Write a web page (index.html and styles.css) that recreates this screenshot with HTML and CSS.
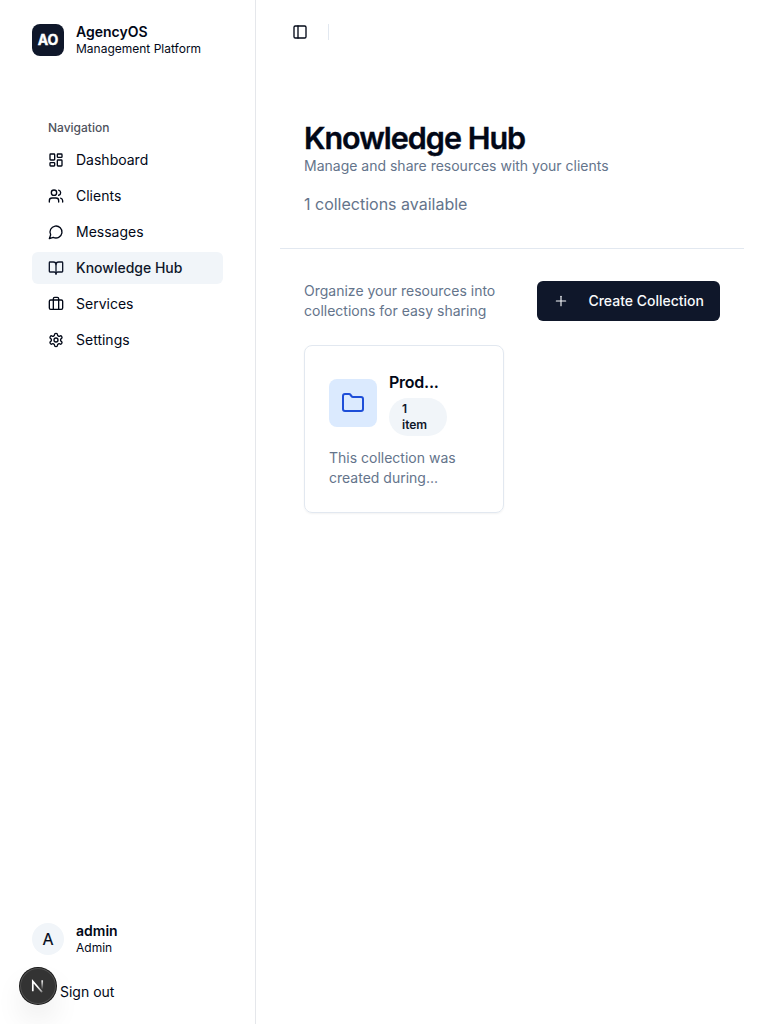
FILE: index.html
```html
<!DOCTYPE html>
<html lang="en">
<head>
<meta charset="utf-8">
<title>AgencyOS - Knowledge Hub</title>
<link rel="stylesheet" href="styles.css">
</head>
<body>
<div class="app">
  <aside class="sidebar">
    <div class="brand">
      <div class="logo">AO</div>
      <div class="stack"><span class="name">AgencyOS</span><span class="sub">Management Platform</span></div>
    </div>
    <nav class="nav">
      <div class="nav-label">Navigation</div>
      <a class="item"><svg class="icon" viewBox="0 0 24 24"><rect width="7" height="9" x="3" y="3" rx="1"/><rect width="7" height="5" x="14" y="3" rx="1"/><rect width="7" height="9" x="14" y="12" rx="1"/><rect width="7" height="5" x="3" y="16" rx="1"/></svg>Dashboard</a>
      <a class="item"><svg class="icon" viewBox="0 0 24 24"><path d="M16 21v-2a4 4 0 0 0-4-4H6a4 4 0 0 0-4 4v2"/><circle cx="9" cy="7" r="4"/><path d="M22 21v-2a4 4 0 0 0-3-3.87"/><path d="M16 3.13a4 4 0 0 1 0 7.75"/></svg>Clients</a>
      <a class="item"><svg class="icon" viewBox="0 0 24 24"><path d="M7.9 20A9 9 0 1 0 4 16.1L2 22Z"/></svg>Messages</a>
      <a class="item active"><svg class="icon" viewBox="0 0 24 24"><path d="M12 7v14"/><path d="M3 18a1 1 0 0 1-1-1V4a1 1 0 0 1 1-1h5a4 4 0 0 1 4 4 4 4 0 0 1 4-4h5a1 1 0 0 1 1 1v13a1 1 0 0 1-1 1h-6a3 3 0 0 0-3 3 3 3 0 0 0-3-3z"/></svg>Knowledge Hub</a>
      <a class="item"><svg class="icon" viewBox="0 0 24 24"><path d="M16 20V4a2 2 0 0 0-2-2h-4a2 2 0 0 0-2 2v16"/><rect width="20" height="14" x="2" y="6" rx="2"/></svg>Services</a>
      <a class="item"><svg class="icon" viewBox="0 0 24 24"><path d="M12.22 2h-.44a2 2 0 0 0-2 2v.18a2 2 0 0 1-1 1.73l-.43.25a2 2 0 0 1-2 0l-.15-.08a2 2 0 0 0-2.73.73l-.22.38a2 2 0 0 0 .73 2.73l.15.1a2 2 0 0 1 1 1.72v.51a2 2 0 0 1-1 1.74l-.15.09a2 2 0 0 0-.73 2.73l.22.38a2 2 0 0 0 2.73.73l.15-.08a2 2 0 0 1 2 0l.43.25a2 2 0 0 1 1 1.73V20a2 2 0 0 0 2 2h.44a2 2 0 0 0 2-2v-.18a2 2 0 0 1 1-1.73l.43-.25a2 2 0 0 1 2 0l.15.08a2 2 0 0 0 2.73-.73l.22-.39a2 2 0 0 0-.73-2.73l-.15-.08a2 2 0 0 1-1-1.74v-.5a2 2 0 0 1 1-1.74l.15-.09a2 2 0 0 0 .73-2.73l-.22-.38a2 2 0 0 0-2.73-.73l-.15.08a2 2 0 0 1-2 0l-.43-.25a2 2 0 0 1-1-1.73V4a2 2 0 0 0-2-2z"/><circle cx="12" cy="12" r="3"/></svg>Settings</a>
    </nav>
    <div class="footer">
      <div class="user">
        <div class="avatar">A</div>
        <div class="stack"><span class="name">admin</span><span class="sub">Admin</span></div>
      </div>
      <a class="signout">Sign out</a>
    </div>
  </aside>
  <main class="main">
    <header class="topbar">
      <svg class="icon" viewBox="0 0 24 24"><rect width="18" height="18" x="3" y="3" rx="2"/><path d="M9 3v18"/></svg>
      <span class="divider"></span>
    </header>
    <div class="page">
      <section class="heading">
        <h1 class="title">Knowledge Hub</h1>
        <p class="muted">Manage and share resources with your clients</p>
        <p class="count">1 collections available</p>
      </section>
      <section class="content">
        <div class="toolbar">
          <p class="muted">Organize your resources into collections for easy sharing</p>
          <button class="create"><svg class="icon plus" viewBox="0 0 24 24"><path d="M5 12h14"/><path d="M12 5v14"/></svg>Create Collection</button>
        </div>
        <div class="grid">
          <article class="card">
            <div class="card-head">
              <div class="folder"><svg class="icon big" viewBox="0 0 24 24"><path d="M20 20a2 2 0 0 0 2-2V8a2 2 0 0 0-2-2h-7.9a2 2 0 0 1-1.69-.9L9.6 3.9A2 2 0 0 0 7.93 3H4a2 2 0 0 0-2 2v13a2 2 0 0 0 2 2Z"/></svg></div>
              <div class="card-info">
                <h3 class="card-title">Prod...</h3>
                <div class="badge">1<br>item</div>
              </div>
            </div>
            <p class="muted">This collection was created during...</p>
          </article>
        </div>
      </section>
    </div>
  </main>
</div>
<div class="dev-badge">
  <svg width="36" height="36" viewBox="0 0 36 36" fill="none">
    <defs>
      <linearGradient id="diag" x1="18" y1="18" x2="23.5" y2="24.5" gradientUnits="userSpaceOnUse"><stop stop-color="#fff"/><stop offset=".7" stop-color="#fff" stop-opacity=".6"/><stop offset="1" stop-color="#fff" stop-opacity="0"/></linearGradient>
      <linearGradient id="bar" x1="22" y1="12" x2="22" y2="21.5" gradientUnits="userSpaceOnUse"><stop stop-color="#fff"/><stop offset="1" stop-color="#fff" stop-opacity="0"/></linearGradient>
    </defs>
    <path d="M12.8 23.2V13.2l9.4 11" stroke="url(#diag)" stroke-width="1.7"/>
    <path d="M22.2 12.3v9.2" stroke="url(#bar)" stroke-width="1.7"/>
  </svg>
</div>
</body>
</html>
```
FILE: styles.css
```css
* { box-sizing: border-box; }
body { margin: 0; font-family: Inter, "Liberation Sans", sans-serif; font-size: 14px; line-height: 20px; color: #020817; background: #fff; }
h1, h3, p { margin: 0; }
.app { display: flex; height: 1024px; }
.icon { width: 16px; height: 16px; flex: none; fill: none; stroke: currentColor; stroke-width: 2; stroke-linecap: round; stroke-linejoin: round; }
.sidebar { width: 256px; flex: none; display: flex; flex-direction: column; padding: 24px 32px 16px; border-right: 1px solid #e5e7eb; }
.brand, .user { display: flex; align-items: center; gap: 12px; height: 32px; }
.logo { width: 32px; height: 32px; border-radius: 8px; background: #0f172a; color: #fff; font-weight: 700; -webkit-text-stroke: .4px currentColor; display: flex; align-items: center; justify-content: center; }
.stack { display: flex; flex-direction: column; }
.name { font-weight: 600; line-height: 17.5px; }
.sub { font-size: 12px; line-height: 16px; }
.nav { display: flex; flex-direction: column; gap: 4px; margin-top: 56px; }
.nav-label { height: 32px; margin-bottom: -4px; padding-left: 16px; display: flex; align-items: center; font-size: 12px; font-weight: 500; color: #4e525d; }
.item { height: 32px; padding-left: 16px; display: flex; align-items: center; gap: 12px; border-radius: 6px; }
.active { background: #f1f5f9; color: #0f172a; font-weight: 500; }
.footer { margin-top: auto; }
.avatar { width: 32px; height: 32px; border-radius: 50%; background: #f1f5f9; display: flex; align-items: center; justify-content: center; font-size: 16px; -webkit-text-stroke: .2px currentColor; }
.signout { display: flex; align-items: center; height: 32px; padding-left: 28px; margin-top: 21px; }
.main { flex: 1; min-width: 0; }
.topbar { height: 64px; display: flex; align-items: center; gap: 20px; padding-left: 36px; }
.divider { width: 1px; height: 16px; background: #e2e8f0; }
.page { padding: 56px 24px 0; }
.heading { padding: 0 24px 32px; border-bottom: 1px solid #e2e8f0; }
.title { font-size: 30.5px; line-height: 36px; font-weight: 600; letter-spacing: -1px; -webkit-text-stroke: .4px currentColor; }
.muted { color: #64748b; }
.count { margin-top: 16px; font-size: 16px; line-height: 24px; color: #64748b; }
.content { padding: 32px 24px 0; }
.toolbar { display: flex; align-items: center; justify-content: space-between; gap: 24px; }
.create { flex: none; display: flex; align-items: center; height: 40px; padding: 0 16px; gap: 19.5px; border: 0; border-radius: 6px; background: #0f172a; color: #f8fafc; font: 500 14px/20px Inter, sans-serif; }
.plus { stroke-width: 1.7; }
.grid { display: grid; grid-template-columns: 200px; margin-top: 24px; }
.card { height: 168px; padding: 24px; border: 1px solid #e2e8f0; border-radius: 8px; box-shadow: 0 1px 2px rgba(0,0,0,.05); }
.card-head { display: flex; align-items: center; gap: 12px; margin-bottom: 12px; }
.folder { width: 48px; height: 48px; border-radius: 8px; background: #dbeafe; color: #1d4ed8; display: flex; align-items: center; justify-content: center; }
.big { width: 24px; height: 24px; }
.card-title { font-size: 16px; line-height: 24px; font-weight: 600; letter-spacing: -.25px; }
.badge { width: 58px; margin-top: 4px; padding: 3px 13px; border-radius: 19px; background: #f1f5f9; color: #0f172a; font-size: 12px; line-height: 16px; font-weight: 600; }
.dev-badge { position: fixed; left: 20px; bottom: 20px; width: 36px; height: 36px; border-radius: 50%; background: #333; box-shadow: 0 0 0 1px #171717, inset 0 0 0 1px rgba(255,255,255,.14), 0 16px 32px -8px rgba(0,0,0,.24); }
.dev-badge svg { display: block; }
```
